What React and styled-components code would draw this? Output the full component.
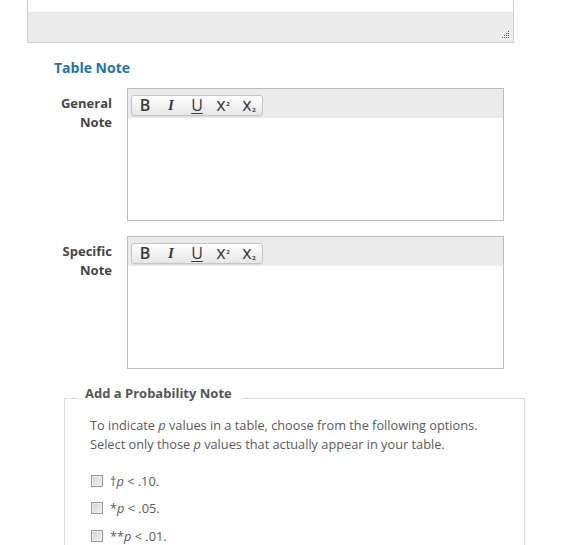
import React from "react";
import styled, { createGlobalStyle } from "styled-components";

const GlobalStyle = createGlobalStyle`
  html, body {
    margin: 0;
    padding: 0;
    background: #fff;
    overflow: hidden;
  }
  body {
    font-family: "Open Sans", "DejaVu Sans", sans-serif;
    color: #555;
  }
`;

const Page = styled.div`
  width: 570px;
  height: 545px;
  overflow: hidden;
`;

const PrevBox = styled.div`
  margin-left: 27px;
  width: 485px;
  border: 1px solid #cfcfcf;
  border-top: none;
`;

const PrevBody = styled.div`
  height: 12px;
  background: #fff;
`;

const PrevFooter = styled.div`
  height: 30px;
  background: #ececec;
  border-top: 1px solid #e2e2e2;
  display: flex;
  justify-content: flex-end;
  align-items: flex-end;
  padding: 0 3px 3px 0;
  box-sizing: border-box;
`;

const Heading = styled.h3`
  margin: 15px 0 11px 54px;
  font-size: 14px;
  line-height: 19px;
  font-weight: 700;
  color: #1f74a8;
`;

const Row = styled.div`
  display: flex;
  align-items: flex-start;
  margin-bottom: 15px;
`;

const Label = styled.label`
  width: 85px;
  margin-left: 27px;
  margin-right: 15px;
  padding-top: 6px;
  text-align: right;
  font-size: 13px;
  line-height: 19px;
  font-weight: 700;
  color: #454545;
`;

const Editor = styled.div`
  width: 375px;
  height: 131px;
  border: 1px solid #bcbcbc;
  background: #fff;
`;

const Toolbar = styled.div`
  height: 29px;
  background: #ebebeb;
  padding: 5px 0 0 3px;
  box-sizing: border-box;
`;

const ButtonGroup = styled.div`
  display: inline-flex;
  height: 19px;
  border: 1px solid #c6c6c6;
  border-radius: 3px;
  background: linear-gradient(#ffffff, #e6e6e6);
  box-shadow: 0 1px 0 rgba(0, 0, 0, 0.06);
`;

const ToolButton = styled.span`
  width: 26px;
  height: 19px;
  display: flex;
  align-items: center;
  justify-content: center;
  font-family: "Open Sans", "DejaVu Sans", sans-serif;
  font-size: 16px;
  line-height: 19px;
  color: #3a3a3a;
  font-weight: ${(p) => (p.bold ? 600 : 400)};
  text-decoration: ${(p) => (p.under ? "underline" : "none")};
  text-underline-offset: 2px;
`;

const Script = styled.span`
  position: relative;
  font-size: 18px;
  line-height: 19px;
  padding-right: 4px;
  margin-top: -3px;

  &::after {
    content: "2";
    position: absolute;
    right: 0;
    font-size: 6px;
    line-height: 6px;
    font-weight: 700;
    ${(p) => (p.sub ? "bottom: 1px;" : "top: 6px;")}
  }
`;

const ItalicI = styled.span`
  font-family: "Liberation Serif", serif;
  font-weight: 700;
  font-style: italic;
  font-size: 15px;
`;

const Fieldset = styled.fieldset`
  margin: 0 0 0 64px;
  width: 461px;
  height: 300px;
  border: 1px solid #dadada;
  padding: 0 0 0 25px;
  box-sizing: border-box;
`;

const Legend = styled.legend`
  margin-left: -12px;
  padding: 0 10px 10px 7px;
  font-size: 13px;
  line-height: 18px;
  font-weight: 700;
  color: #555;
`;

const Intro = styled.p`
  margin: 4px 0 13px;
  font-size: 12.75px;
  line-height: 19px;
  color: #5a5a5a;
`;

const Option = styled.label`
  display: flex;
  align-items: center;
  height: 27.5px;
  font-size: 12.75px;
  color: #5a5a5a;
  gap: 7px;
`;

const Check = styled.input.attrs({ type: "checkbox" })`
  appearance: none;
  margin: 0 0 0 1px;
  width: 12px;
  height: 12px;
  border: 1px solid #9a9a9a;
  background: linear-gradient(135deg, #d4d4d4, #f2f2f2);
  box-shadow: inset 0 0 0 1px #eee;
  box-sizing: border-box;
`;

const Resizer = () => (
  <svg width="8" height="8" viewBox="0 0 8 8">
    {[
      [7, 1],
      [5, 3], [7, 3],
      [3, 5], [5, 5], [7, 5],
      [1, 7], [3, 7], [5, 7], [7, 7],
    ].map(([x, y], i) => (
      <rect key={i} x={x - 1} y={y - 1} width="1" height="1" fill="#555" />
    ))}
  </svg>
);

const RichEditor = () => (
  <Editor>
    <Toolbar>
      <ButtonGroup>
        <ToolButton bold>B</ToolButton>
        <ToolButton>
          <ItalicI>I</ItalicI>
        </ToolButton>
        <ToolButton under>U</ToolButton>
        <ToolButton>
          <Script>x</Script>
        </ToolButton>
        <ToolButton>
          <Script sub>x</Script>
        </ToolButton>
      </ButtonGroup>
    </Toolbar>
  </Editor>
);

export default function App() {
  return (
    <Page>
      <GlobalStyle />
      <PrevBox>
        <PrevBody />
        <PrevFooter>
          <Resizer />
        </PrevFooter>
      </PrevBox>
      <Heading>Table Note</Heading>
      <Row>
        <Label>
          General
          <br />
          Note
        </Label>
        <RichEditor />
      </Row>
      <Row>
        <Label>
          Specific
          <br />
          Note
        </Label>
        <RichEditor />
      </Row>
      <Fieldset>
        <Legend>Add a Probability Note</Legend>
        <Intro>
          To indicate <i>p</i> values in a table, choose from the following options.
          <br />
          Select only those <i>p</i> values that actually appear in your table.
        </Intro>
        <Option>
          <Check />
          <span>
            †<i>p</i> &lt; .10.
          </span>
        </Option>
        <Option>
          <Check />
          <span>
            *<i>p</i> &lt; .05.
          </span>
        </Option>
        <Option>
          <Check />
          <span>
            **<i>p</i> &lt; .01.
          </span>
        </Option>
      </Fieldset>
    </Page>
  );
}
